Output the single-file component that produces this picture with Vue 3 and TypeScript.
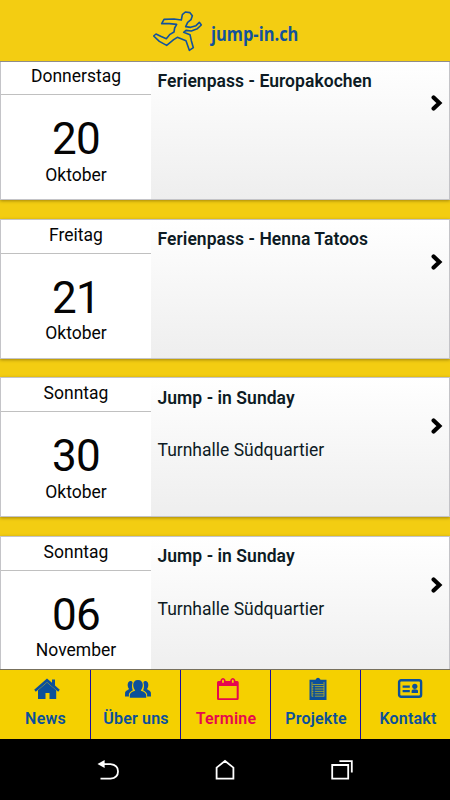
<script setup lang="ts">
interface Termin {
  day: string
  date: string
  month: string
  title: string
  place?: string
}

interface Tab {
  id: string
  label: string
  active?: boolean
}

const termine: Termin[] = [
  { day: 'Donnerstag', date: '20', month: 'Oktober', title: 'Ferienpass - Europakochen' },
  { day: 'Freitag', date: '21', month: 'Oktober', title: 'Ferienpass - Henna Tatoos' },
  { day: 'Sonntag', date: '30', month: 'Oktober', title: 'Jump - in Sunday', place: 'Turnhalle Südquartier' },
  { day: 'Sonntag', date: '06', month: 'November', title: 'Jump - in Sunday', place: 'Turnhalle Südquartier' },
]

const tabs: Tab[] = [
  { id: 'news', label: 'News' },
  { id: 'about', label: 'Über uns' },
  { id: 'dates', label: 'Termine', active: true },
  { id: 'projects', label: 'Projekte' },
  { id: 'contact', label: 'Kontakt' },
]
</script>

<template>
  <div class="screen">
    <header class="header">
      <svg class="runner" viewBox="36 30 156 132" aria-hidden="true">
        <path d="M72 58L102 57L124 60L127 44L136 36L150 38L157 47L153 59L143 67L137 80L152 82L168 77L178 67L184 75L172 86L154 93L138 91L131 97L150 104L154 122L160 143L148 151L138 122L112 112L101 119L80 136L58 124L41 108L48 102L62 109L79 116L90 103L102 96L104 84L110 73L88 71L65 71Z" />
      </svg>
      <span class="brand">jump-in.ch</span>
    </header>

    <main class="list">
      <article v-for="(t, i) in termine" :key="i" class="card">
        <div class="when">
          <div class="day">{{ t.day }}</div>
          <div class="date">{{ t.date }}</div>
          <div class="month">{{ t.month }}</div>
        </div>
        <div class="info">
          <h2 class="title">{{ t.title }}</h2>
          <p v-if="t.place" class="place">{{ t.place }}</p>
        </div>
        <div class="go" :class="{ 'go-low': t.place }">
          <svg class="chevron" viewBox="0 0 12 16" aria-hidden="true">
            <path d="M2.6 2.4L8.4 8L2.6 13.6" />
          </svg>
        </div>
      </article>
    </main>

    <nav class="tabs">
      <a v-for="tab in tabs" :key="tab.id" class="tab" :class="[tab.id, { active: tab.active }]">
        <svg class="icon" viewBox="0 0 28 24" aria-hidden="true">
          <g v-if="tab.id === 'news'">
            <path d="M14 1.4L19 5.8V2.4H22V8.5L26.8 12.8L25.2 14.8L14 5.2L2.8 14.8L1.2 12.8Z" />
            <path d="M14 5.4L23.2 13.2V22H16.5V16H12.5V22H5V13.2Z" />
          </g>
          <g v-else-if="tab.id === 'about'">
            <path d="M8.9 13.2C8 11.2 7.6 8.8 8.6 5.2C7.5 3.4 5 4 4.2 5.6C3.2 7.4 3.6 10.4 5 12C4 13.3 1.3 13.6 1.1 15.8L1 19.4H4.9V17.2C5.2 15.2 7.2 14.3 8.9 13.2Z" />
            <path d="M19.1 13.2C20 11.2 20.4 8.8 19.4 5.2C20.5 3.4 23 4 23.8 5.6C24.8 7.4 24.4 10.4 23 12C24 13.3 26.7 13.6 26.9 15.8L27 19.4H23.1V17.2C22.8 15.2 20.8 14.3 19.1 13.2Z" />
            <path d="M14 3C10.8 3 9.2 5 9.2 8C9.2 10.5 10.3 12.2 11.2 13.5C9.6 14.6 6.3 15 5.8 18V20.8H22.2V18C21.7 15 18.4 14.6 16.8 13.5C17.7 12.2 18.8 10.5 18.8 8C18.8 5 17.2 3 14 3Z" />
          </g>
          <g v-else-if="tab.id === 'dates'">
            <path fill-rule="evenodd" d="M4.2 4H23.3Q24.7 4 24.7 5.5V21.5Q24.7 23 23.3 23H4.4Q3 23 3 21.5V5.5Q3 4 4.4 4ZM5 9V21.2H22.7V9Z" />
            <path class="ring" d="M7.3 6.5V3.2Q9 0.2 10.7 3.2V6.5ZM17.1 6.5V3.2Q18.8 0.2 20.5 3.2V6.5Z" />
          </g>
          <g v-else-if="tab.id === 'projects'">
            <path d="M5.5 2.8H10.7Q11 2.6 11.8 2.5Q12.2 0.8 14 0.8Q15.8 0.8 16.2 2.5Q17 2.6 17.3 2.8H22.5V23H5.5Z" />
            <path class="paper" d="M8 9.6H9.4M10.8 9.6H20M8 12H9.4M10.8 12H20M8 14.4H9.4M10.8 14.4H20M8 16.8H9.4M10.8 16.8H20M8 19.2H9.4M10.8 19.2H20M8 5V19.5M20 5V19.5M8.5 7.5H19.5" />
          </g>
          <g v-else>
            <rect class="frame" x="3.1" y="3.2" width="22" height="16.6" rx="2" />
            <circle cx="18.8" cy="9.3" r="2.6" />
            <path d="M15.6 16V14Q15.6 12.2 18.8 12.2T22 14V16Z" />
            <path class="bar" d="M6.6 9.7H13.8M6.6 14.1H13.8" />
          </g>
        </svg>
        <span class="label">{{ tab.label }}</span>
      </a>
    </nav>

    <footer class="system">
      <svg class="sys" viewBox="0 0 24 24" aria-hidden="true">
        <path class="solid" d="M1.5 7L8.6 3V11Z" />
        <path d="M8 7.2H14.5Q22 8 22 14.4T14.5 21.6H4.5" />
      </svg>
      <svg class="sys" viewBox="0 0 24 24" aria-hidden="true">
        <path d="M3.6 21.6V10.6L12 4L20.4 10.6V21.6Z" />
      </svg>
      <svg class="sys" viewBox="0 0 24 24" aria-hidden="true">
        <path d="M2.2 8H18.2V21.6H2.2ZM9.4 4.2H21.8V15.6" />
      </svg>
    </footer>
  </div>
</template>

<style>
body {
  margin: 0;
  overflow: hidden;
}
</style>

<style scoped>
.screen {
  width: 450px;
  height: 800px;
  display: flex;
  flex-direction: column;
  overflow: hidden;
  background: #f3cd12;
  font-family: Roboto, 'Liberation Sans', sans-serif;
}

.header {
  flex: none;
  box-sizing: border-box;
  height: 62px;
  display: flex;
  align-items: flex-start;
  padding: 10px 0 0 152px;
  border-bottom: 1px solid #8f8c8a;
  background: #f3cd12;
  z-index: 1;
}

.runner {
  width: 52px;
  height: 44px;
}

.runner path {
  fill: none;
  stroke: #12529c;
  stroke-width: 4.8;
  stroke-linejoin: round;
}

.brand {
  margin: 11px 0 0 7px;
  font: 700 19px/26px 'Open Sans', sans-serif;
  color: #12529c;
  transform-origin: left;
  transform: scaleX(0.865);
}

.list {
  flex: 1;
  min-height: 0;
  overflow: hidden;
  display: flex;
  flex-direction: column;
  gap: 18.65px;
  margin-top: -1.9px;
}

.card {
  flex: none;
  box-sizing: border-box;
  height: 140px;
  display: flex;
  border: 1px solid #c4c4c8;
  background: linear-gradient(#ffffff, #eeeeee);
  box-shadow: 0 1px 3px rgba(90, 70, 0, 0.5);
}

.when {
  width: 150px;
  background: #fff;
  text-align: center;
  color: #050505;
  font-size: 17.5px;
}

.day {
  box-sizing: border-box;
  height: 34px;
  line-height: 31px;
  border-bottom: 1px solid #c0c0c0;
}

.date {
  margin-top: 18px;
  font-size: 44px;
  line-height: 52px;
  letter-spacing: -0.7px;
}

.month {
  margin-top: -1.6px;
  line-height: 22px;
}

.info {
  flex: 1;
  padding: 8.4px 0 0 6.5px;
  color: #0d1b24;
}

.title {
  margin: 0;
  font-size: 17.5px;
  line-height: 22px;
  font-weight: 600;
  letter-spacing: 0.05px;
}

.place {
  margin: 30.4px 0 0;
  font-size: 17.5px;
  line-height: 22px;
}

.go {
  padding: 34px 6px 0 0;
}

.go-low {
  padding-top: 40px;
}

.chevron {
  display: block;
  width: 12px;
  height: 16px;
}

.chevron path {
  fill: none;
  stroke: #000;
  stroke-width: 4.2;
  stroke-linecap: round;
}

.tabs {
  flex: none;
  box-sizing: border-box;
  height: 70px;
  display: flex;
  border-top: 1px solid #77705c;
  background: #f5d000;
}

.tab {
  box-sizing: border-box;
  flex: none;
  width: 90px;
  display: flex;
  flex-direction: column;
  align-items: center;
  padding: 7px 0 0 1px;
  color: #0b509b;
}

.tab + .tab {
  border-left: 1px solid #1a10a0;
}

.tab.contact {
  padding-left: 5px;
}

.tab.active {
  color: #e6074f;
}

.icon {
  width: 28px;
  height: 24px;
  fill: currentColor;
  margin-left: 3px;
}

.ring {
  fill: #f5d000;
  stroke: currentColor;
  stroke-width: 1.6;
}

.paper {
  stroke: #f5d000;
  stroke-width: 0.8;
  opacity: 0.75;
}

.frame {
  fill: none;
  stroke: currentColor;
  stroke-width: 2.4;
}

.bar {
  stroke: currentColor;
  stroke-width: 2.2;
}

.label {
  margin-top: 7.5px;
  font-size: 16px;
  line-height: 20px;
  font-weight: 600;
  letter-spacing: 0.2px;
}

.system {
  flex: none;
  height: 61px;
  display: flex;
  justify-content: center;
  align-items: flex-start;
  gap: 93px;
  background: #000;
}

.sys {
  width: 24px;
  height: 24px;
  margin-top: 18px;
  fill: none;
  stroke: #fff;
  stroke-width: 1.8;
}

.solid {
  fill: #fff;
  stroke: none;
}
</style>
